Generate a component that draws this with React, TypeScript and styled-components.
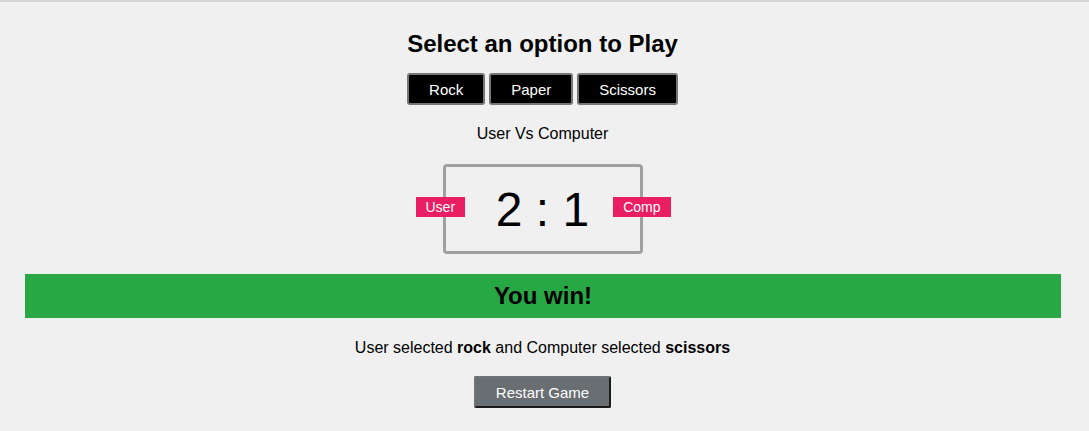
import React from "react";
import styled, { createGlobalStyle } from "styled-components";

const Global = createGlobalStyle`
  html, body { margin: 0; padding: 0; }
  body {
    background: #f0f0f0;
    font-family: "Liberation Sans", Arial, sans-serif;
    color: #000;
    border-top: 2px solid #d4d4d4;
  }
`;

const Page = styled.main`
  display: flex;
  flex-direction: column;
  align-items: center;
  padding: 28px 4px 0 0;
`;

const Title = styled.h2`
  margin: 0;
  font-size: 24px;
  font-weight: bold;
  line-height: 28px;
`;

const Choices = styled.div`
  display: flex;
  gap: 4px;
  margin-top: 15px;
`;

const ChoiceButton = styled.button`
  font-family: "Liberation Sans", Arial, sans-serif;
  font-size: 15px;
  line-height: 17px;
  color: #fff;
  background: #000;
  border: 2px solid #767676;
  border-radius: 3px;
  padding: 5.5px 20px;
  height: 32px;
`;

const VsLabel = styled.p`
  margin: 19px 0 0;
  font-size: 16px;
  line-height: 19px;
`;

const ScoreBoard = styled.div`
  position: relative;
  box-sizing: border-box;
  width: 200px;
  height: 90px;
  margin-top: 21px;
  border: 3px solid #a0a0a0;
  border-radius: 4px;
  display: flex;
  align-items: center;
  justify-content: center;
  font-size: 48px;
`;

const Badge = styled.span<{ $side: "left" | "right" }>`
  position: absolute;
  top: 30px;
  ${(p) => (p.$side === "left" ? "left: -30px;" : "right: -31px;")}
  background: #e91e63;
  color: #fff;
  font-size: 14px;
  line-height: 20px;
  padding: 0 10px;
`;

const ResultBar = styled.div`
  align-self: stretch;
  margin: 20px 24px 0 25px;
  height: 44px;
  background: #28a745;
  display: flex;
  align-items: center;
  justify-content: center;
  font-size: 24px;
  font-weight: bold;
`;

const Summary = styled.p`
  margin: 20px 0 0;
  font-size: 16px;
  line-height: 19px;
`;

const RestartButton = styled.button`
  margin-top: 19px;
  font-family: "Liberation Sans", Arial, sans-serif;
  font-size: 15px;
  line-height: 17px;
  color: #fff;
  background: #686e71;
  border: 2px solid;
  border-color: #6e7477 #1c1c1c #1c1c1c #6e7477;
  border-radius: 2px;
  padding: 5.5px 20px;
  height: 32px;
`;

export default function App() {
  return (
    <>
      <Global />
      <Page>
        <Title>Select an option to Play</Title>
        <Choices>
          <ChoiceButton>Rock</ChoiceButton>
          <ChoiceButton>Paper</ChoiceButton>
          <ChoiceButton>Scissors</ChoiceButton>
        </Choices>
        <VsLabel>User Vs Computer</VsLabel>
        <ScoreBoard>
          <Badge $side="left">User</Badge>
          2 : 1
          <Badge $side="right">Comp</Badge>
        </ScoreBoard>
        <ResultBar>You win!</ResultBar>
        <Summary>
          User selected <b>rock</b> and Computer selected <b>scissors</b>
        </Summary>
        <RestartButton>Restart Game</RestartButton>
      </Page>
    </>
  );
}
